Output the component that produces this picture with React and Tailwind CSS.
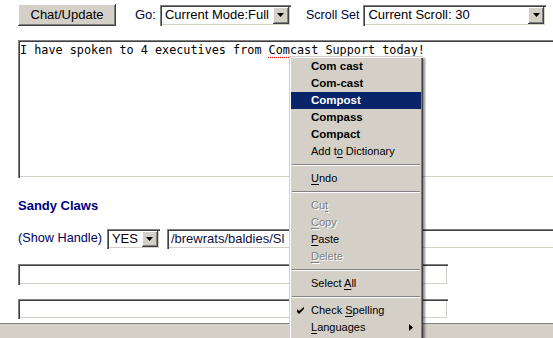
import React from "react";

const sunken =
  "bg-white shadow-[inset_1px_1px_0_#808080,inset_2px_2px_0_#404040,inset_-1px_-1px_0_#ffffff,inset_-2px_-2px_0_#d4d0c8]";
const raised =
  "bg-[#d4d0c8] shadow-[inset_-1px_-1px_0_#404040,inset_1px_1px_0_#ffffff,inset_-2px_-2px_0_#808080,inset_2px_2px_0_#d4d0c8]";

function Arrow() {
  return (
    <div className={`${raised} absolute right-[2px] top-[2px] bottom-[2px] w-[16px] flex items-center justify-center`}>
      <svg width="7" height="4" viewBox="0 0 7 4">
        <path d="M0 0h7L3.5 4z" fill="#000" />
      </svg>
    </div>
  );
}

function Select({ value, className }) {
  return (
    <div className={`${sunken} relative shrink-0 h-[21px] flex items-center pl-[5px] text-black ${className}`}>
      <span className="whitespace-nowrap">{value}</span>
      <Arrow />
    </div>
  );
}

const U = ({ children }) => <span className="underline underline-offset-[2px]">{children}</span>;

function Item({ children, bold, active, disabled, check, sub }) {
  return (
    <div
      className={`relative h-[17px] flex items-center pl-[20px] whitespace-pre ${
        active ? "bg-[#0a246a] text-white" : disabled ? "text-[#808080] [text-shadow:1px_1px_0_#ffffff]" : "text-black"
      } ${bold ? "font-bold text-[11.5px]" : ""}`}
    >
      {check && (
        <svg className="absolute left-[6px] top-[5px]" width="7" height="7" viewBox="0 0 7 7">
          <path d="M0 2v3l2 2 5-5V0L2 4z" fill="#000" />
        </svg>
      )}
      <span>{children}</span>
      {sub && (
        <svg className="absolute right-[8px] top-[5px]" width="4" height="7" viewBox="0 0 4 7">
          <path d="M0 0l4 3.5L0 7z" fill="#000" />
        </svg>
      )}
    </div>
  );
}

const Sep = () => (
  <div className="h-[10px] flex flex-col justify-center px-[1px]">
    <div className="h-px bg-[#808080]" />
    <div className="h-px bg-white" />
  </div>
);

function Menu() {
  return (
    <div className="absolute left-[289px] top-[56px] w-[134px] h-[284px] bg-[#d4d0c8] p-[2px] shadow-[inset_1px_1px_0_#d4d0c8,inset_2px_2px_0_#ffffff,inset_-1px_-1px_0_#404040,inset_-2px_-2px_0_#808080,2px_2px_2px_rgba(0,0,0,0.45)] font-['Liberation_Sans',Arial,sans-serif] text-[11px]">
      <Item bold>Com cast</Item>
      <Item bold>Com-cast</Item>
      <Item bold active>Compost</Item>
      <Item bold>Compass</Item>
      <Item bold>Compact</Item>
      <Item>Add t<U>o</U> Dictionary</Item>
      <Sep />
      <Item><U>U</U>ndo</Item>
      <Sep />
      <Item disabled>Cu<U>t</U></Item>
      <Item disabled><U>C</U>opy</Item>
      <Item><U>P</U>aste</Item>
      <Item disabled><U>D</U>elete</Item>
      <Sep />
      <Item>Select <U>A</U>ll</Item>
      <Sep />
      <Item check>Check <U>S</U>pelling</Item>
      <Item sub><U>L</U>anguages</Item>
    </div>
  );
}

export default function App() {
  return (
    <div className="relative w-[553px] h-[338px] overflow-hidden bg-white font-['Liberation_Sans',Arial,sans-serif] text-[13px] text-[#00003c]">
      <div className="flex items-center pl-[18px] pt-[4px] h-[26px]">
        <button className={`${raised} shrink-0 w-[98px] h-[22px] text-black text-[13px]`}>Chat/Update</button>
        <span className="ml-[19px] whitespace-nowrap">Go:</span>
        <Select value="Current Mode:Full" className="ml-[4px] w-[131px]" />
        <span className="ml-[15px] whitespace-nowrap text-[12.5px]">Scroll Set</span>
        <Select value="Current Scroll: 30" className="ml-[4px] w-[183px]" />
      </div>

      <div className={`${sunken} ml-[18px] mt-[14px] w-[560px] h-[138px] pl-[2px] pt-[3px] font-['DejaVu_Sans_Mono',monospace] text-[11.8px] leading-[14px] text-black whitespace-nowrap`}>
        I have spoken to 4 executives from{" "}
        <span className="underline decoration-dotted decoration-[#e00000] underline-offset-[3px]">Comcast</span> Support today!
      </div>

      <div className="ml-[18px] mt-[20px] leading-[16px] font-bold text-[#000080]">Sandy Claws</div>

      <div className="flex items-center ml-[18px] mt-[15px] h-[20px]">
        <span className="shrink-0 whitespace-nowrap text-[#000066] text-[12.7px]">(Show Handle)</span>
        <Select value="YES" className="ml-[5px] w-[53px] !h-[20px]" />
        <div className={`${sunken} shrink-0 ml-[7px] w-[400px] h-[20px] flex items-center pl-[4px] text-[#101040] whitespace-nowrap`}>
          /brewrats/baldies/Sl
        </div>
      </div>

      <div className={`${sunken} ml-[18px] mt-[15px] w-[430px] h-[21px]`} />
      <div className={`${sunken} ml-[18px] mt-[14px] w-[430px] h-[20px]`} />

      <div className="mt-[4px] h-[20px] bg-[#d4d0c8] border-t border-[#808080]" />

      <Menu />
    </div>
  );
}
